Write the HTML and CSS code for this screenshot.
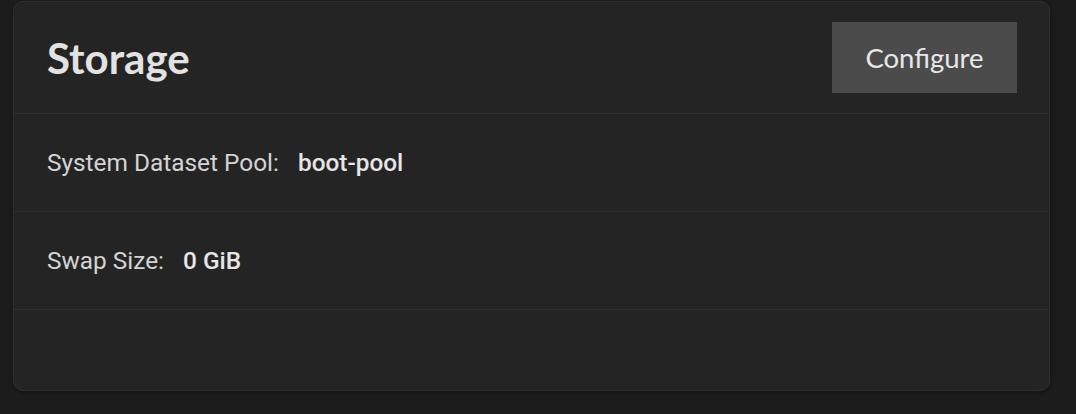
FILE: index.html
```html
<!DOCTYPE html>
<html lang="en">
<head>
    <meta charset="UTF-8">
    <meta name="viewport" content="width=device-width, initial-scale=1.0">
    <title>Storage</title>
    <link rel="stylesheet" href="styles.css">
</head>
<body>
    <div class="card">
        <div class="card-header">
            <h1>Storage</h1>
            <button class="configure">Configure</button>
        </div>
        <div class="row">
            <span class="label">System Dataset Pool:</span>
            <span class="value">boot-pool</span>
        </div>
        <div class="row">
            <span class="label">Swap Size:</span>
            <span class="value">0 GiB</span>
        </div>
        <div class="row empty"></div>
    </div>
</body>
</html>
```

FILE: styles.css
```css
body {
    margin: 0;
    padding: 1px 26px 22px 13px;
    background-color: #1c1c1c;
    font-family: "Roboto", "Liberation Sans", sans-serif;
}
.card {
    background-color: #242424;
    border: 1px solid #303030;
    border-radius: 10px;
    box-shadow: 0 2px 4px rgba(0, 0, 0, 0.35);
    overflow: hidden;
}
.card-header {
    height: 111px;
    display: flex;
    align-items: center;
    justify-content: space-between;
    padding: 0 32px 0 33px;
    border-bottom: 1px solid #303030;
}
.card-header h1 {
    margin: 0;
    font-family: "Lato", sans-serif;
    font-weight: 700;
    font-size: 42px;
    color: #e2e2e2;
}
.configure {
    height: 71px;
    width: 185px;
    background-color: #4b4b4b;
    border: none;
    border-radius: 0;
    color: #e8e8e8;
    font-family: "Lato", sans-serif;
    font-size: 27.5px;
    cursor: pointer;
}
.row {
    height: 97px;
    display: flex;
    align-items: center;
    padding: 0 33px;
    border-bottom: 1px solid #303030;
    font-size: 24.4px;
}
.row.empty {
    height: 80px;
    border-bottom: none;
}
.label {
    color: #d4d4d4;
    margin-right: 19px;
}
.value {
    color: #e6e6e6;
    font-weight: 500;
}
```
